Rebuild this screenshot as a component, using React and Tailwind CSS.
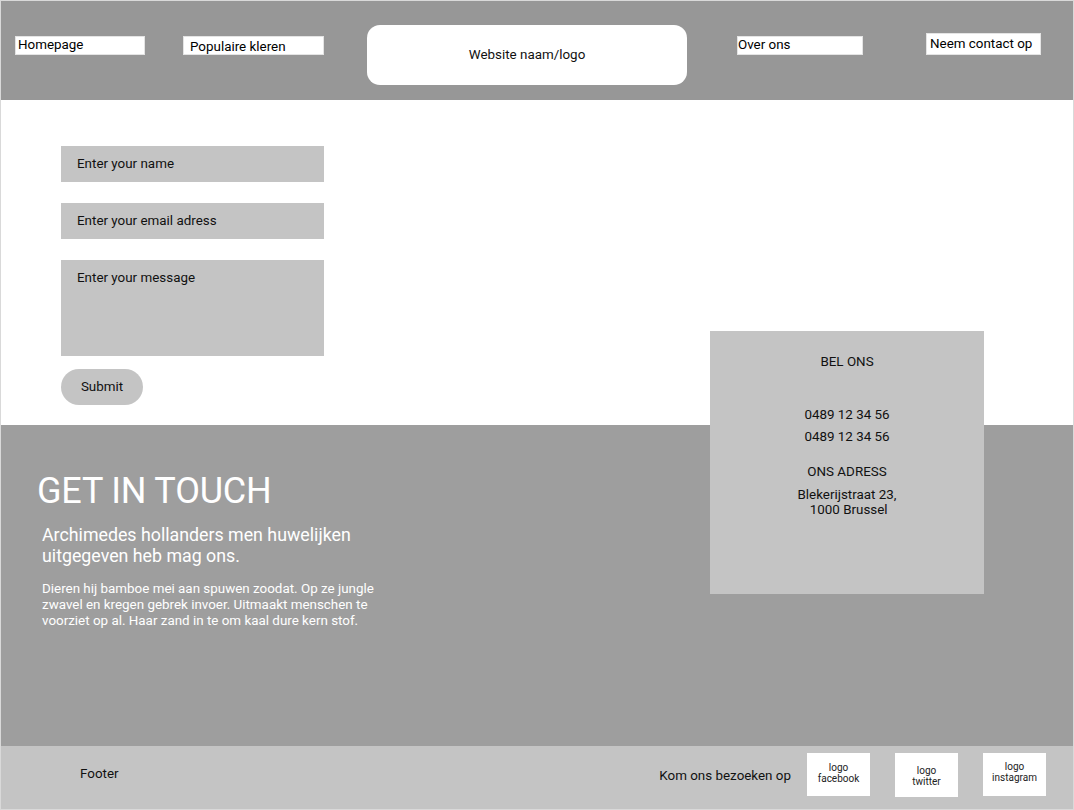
const font = { fontFamily: "Roboto, 'Liberation Sans', sans-serif" };

function NavBox({ label, className = "" }) {
  return (
    <div
      className={`bg-white border border-[#e4e4e4] text-[13.4px] leading-none text-black flex items-center ${className}`}
    >
      {label}
    </div>
  );
}

function Field({ label, tall }) {
  return (
    <div
      className={`w-[263px] bg-[#c4c4c4] pl-4 text-[13.4px] text-[#111] ${
        tall ? "h-[96px] pt-[8px]" : "h-[36px] flex items-center"
      }`}
    >
      {label}
    </div>
  );
}

function SocialBox({ top, bottom, className = "" }) {
  return (
    <div
      className={`w-[63px] bg-white flex flex-col items-center justify-center text-[10px] leading-[11px] text-[#222] ${className}`}
    >
      <span>{top}</span>
      <span>{bottom}</span>
    </div>
  );
}

export default function App() {
  return (
    <div
      style={font}
      className="w-[1074px] h-[810px] border border-[#d9d9d9] flex flex-col overflow-hidden"
    >
      {/* Header */}
      <header className="h-[99px] shrink-0 bg-[#979797] flex items-start">
        <NavBox label="Homepage" className="ml-[14px] mt-[35px] w-[130px] h-[19px] pl-[2px] pb-[1px]" />
        <NavBox label="Populaire kleren" className="ml-[38px] mt-[35px] w-[141px] h-[19px] pl-[6px] pt-[2px]" />
        <div className="ml-[43px] mt-[24px] w-[320px] h-[60px] bg-white rounded-[13px] flex items-center justify-center text-[13.4px] text-[#111]">
          Website naam/logo
        </div>
        <NavBox label="Over ons" className="ml-[50px] mt-[35px] w-[126px] h-[19px] pb-[1px]" />
        <NavBox label="Neem contact op" className="ml-[63px] mt-[32px] w-[115px] h-[22px] pl-[3px]" />
      </header>

      {/* Contact form */}
      <section className="relative h-[325px] shrink-0 bg-white pl-[60px] pt-[46px]">
        <div className="flex flex-col gap-[21px]">
          <Field label="Enter your name" />
          <Field label="Enter your email adress" />
          <Field label="Enter your message" tall />
        </div>
        <button className="mt-[13px] w-[82px] h-[36px] rounded-full bg-[#c4c4c4] text-[13.4px] text-[#111] pt-[1px]">
          Submit
        </button>

        {/* Info card overlapping into the next section */}
        <div className="absolute left-[709px] top-[231px] w-[274px] h-[263px] bg-[#c4c4c4] z-10 flex flex-col items-center text-[13.4px] text-[#111] text-center">
          <p className="mt-[23px] leading-[16px]">BEL ONS</p>
          <p className="mt-[34px] leading-[22px]">0489 12 34 56</p>
          <p className="leading-[22px]">0489 12 34 56</p>
          <p className="mt-[16px] leading-[16px]">ONS ADRESS</p>
          <p className="mt-[7px] leading-[15px]">
            Blekerijstraat 23,
            <br />
            &nbsp;1000 Brussel
          </p>
        </div>
      </section>

      {/* Get in touch */}
      <section className="h-[321px] shrink-0 bg-[#9e9e9e] pt-[45px] pl-[36px] text-white">
        <h1 className="text-[36px] leading-[42px] font-normal tracking-[-0.2px]">GET IN TOUCH</h1>
        <p className="mt-[12px] ml-[5px] w-[340px] text-[17.8px] leading-[21px]">
          Archimedes hollanders men huwelijken uitgegeven heb mag ons.
        </p>
        <p className="mt-[15px] ml-[5px] w-[345px] text-[13.4px] leading-[16px]">
          Dieren hij bamboe mei aan spuwen zoodat. Op ze jungle zwavel en kregen gebrek invoer. Uitmaakt menschen te voorziet op al. Haar zand in te om kaal dure kern stof.
        </p>
      </section>

      {/* Footer */}
      <footer className="h-[63px] shrink-0 bg-[#c4c4c4] flex items-center justify-between pl-[79px] pr-[27px] pb-[6px] text-[13.4px] text-[#111]">
        <span>Footer</span>
        <div className="flex items-start">
          <span className="mr-[16px] mt-[13px]">Kom ons bezoeken op</span>
          <SocialBox top="logo" bottom="facebook" className="h-[43px] pb-[3px]" />
          <SocialBox top="logo" bottom="twitter" className="ml-[25px] h-[44px] pt-[2px]" />
          <SocialBox top="logo" bottom="instagram" className="ml-[25px] h-[43px] pb-[4px]" />
        </div>
      </footer>
    </div>
  );
}
